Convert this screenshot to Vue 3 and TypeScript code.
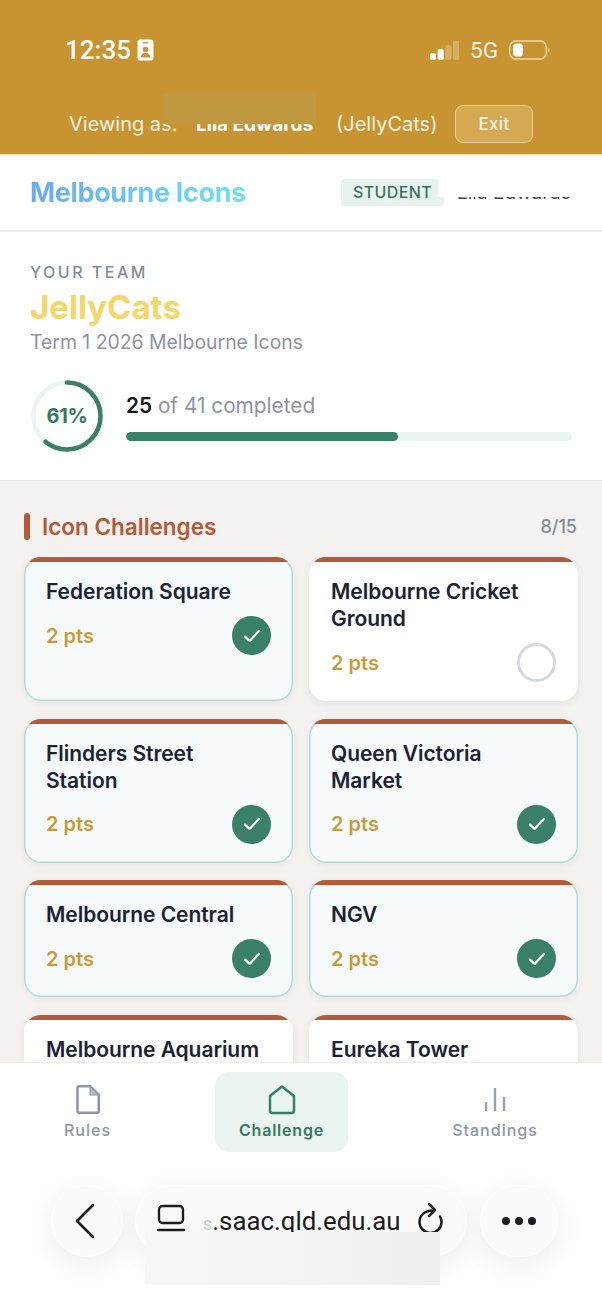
<script setup lang="ts">
interface Challenge { name: string; done: boolean; peek?: boolean }
const cards: Challenge[] = [
  { name: 'Federation Square', done: true },
  { name: 'Melbourne Cricket Ground', done: false },
  { name: 'Flinders Street Station', done: true },
  { name: 'Queen Victoria Market', done: true },
  { name: 'Melbourne Central', done: true },
  { name: 'NGV', done: true },
  { name: 'Melbourne Aquarium', done: false, peek: true },
  { name: 'Eureka Tower', done: false, peek: true },
]
</script>

<template>
  <div class="page">
    <header class="gold">
      <div class="status">
        <div class="time">
          <span>12:35</span>
          <svg width="17" height="22" viewBox="0 0 17 22" class="badge">
            <rect x=".5" y=".5" width="16" height="21" rx="2.5" fill="#fff" />
            <rect x="5.500" y="3" width="6" height="1.500" rx=".7" fill="#c89432" />
            <circle cx="8.500" cy="10.500" r="2.800" fill="#c89432" />
            <path d="M3.800 18.500c0-3.200 2.100-4.700 4.700-4.700s4.700 1.500 4.700 4.700z" fill="#c89432" />
          </svg>
        </div>
        <div class="right">
          <svg width="29" height="20" viewBox="0 0 29 20">
            <rect x="0" y="13" width="6" height="7" rx="1.800" fill="#fff" />
            <rect x="7.700" y="9" width="6" height="11" rx="1.800" fill="#fff" />
            <rect x="15.400" y="5" width="6" height="15" rx="1.800" fill="#fff" opacity=".25" />
            <rect x="23" y="1" width="6" height="19" rx="1.800" fill="#fff" opacity=".25" />
          </svg>
          <span class="net">5G</span>
          <svg width="41" height="20" viewBox="0 0 41 20">
            <rect x=".75" y="1" width="36.500" height="18" rx="6" fill="none" stroke="#f0d9a4" stroke-width="1.400" />
            <rect x="4" y="3.500" width="10" height="13" rx="3.500" fill="#fff" />
            <path d="M39 7.500c1.300.5 1.500 4.500 0 5z" fill="#f0d9a4" />
          </svg>
        </div>
      </div>
      <div class="viewing">
        <span class="v1">Viewing as:</span>
        <strong class="v2">Lila Edwards</strong>
        <span class="v3">(JellyCats)</span>
        <button class="exit">Exit</button>
      </div>
      <div class="blot gold-blot"></div>
    </header>

    <div class="apphead">
      <span class="brand">Melbourne Icons</span>
      <span class="role">STUDENT</span>
      <span class="uname">Lila Edwards</span>
      <div class="blot white-blot"></div>
    </div>

    <section class="team">
      <div class="eyebrow">YOUR TEAM</div>
      <div class="teamname">JellyCats</div>
      <div class="term">Term 1 2026 Melbourne Icons</div>
      <div class="progress">
        <div class="ring">
          <svg width="74" height="74" viewBox="0 0 74 74">
            <circle cx="37" cy="37" r="33.500" fill="none" stroke="#eaf4f0" stroke-width="4.500" />
            <circle cx="37" cy="37" r="33.500" fill="none" stroke="#3a7f68" stroke-width="4.500" stroke-linecap="round"
              stroke-dasharray="128.400 210.500" transform="rotate(-90 37 37)" />
          </svg>
          <span class="pct">61%</span>
        </div>
        <div class="pinfo">
          <div class="ptext"><b>25</b> of 41 completed</div>
          <div class="track"><div class="fill" :style="{ width: '61%' }"></div></div>
        </div>
      </div>
    </section>

    <main class="body">
      <div class="sechead">
        <div class="sectitle"><i class="tick"></i>Icon Challenges</div>
        <span class="count">8/15</span>
      </div>
      <div class="grid">
        <article v-for="c in cards" :key="c.name" class="card" :class="{ done: c.done }">
          <h3>{{ c.name }}</h3>
          <div v-if="!c.peek" class="foot">
            <span class="pts">2 pts</span>
            <span v-if="c.done" class="check">
              <svg width="18" height="18" viewBox="0 0 18 18"><path d="M2 9.600l4.600 4.300L16 3.800" fill="none" stroke="#fff" stroke-width="2.200" stroke-linecap="round" stroke-linejoin="round" /></svg>
            </span>
            <span v-else class="open"></span>
          </div>
        </article>
      </div>
    </main>

    <nav class="tabs">
      <div class="tab">
        <svg width="28" height="32" viewBox="0 0 28 32" fill="none" stroke="#8e95a8" stroke-width="2.500" stroke-linejoin="round">
          <path d="M3.500 5c0-1 .7-1.800 1.700-1.800H16L24.800 12v16c0 1-.7 1.800-1.700 1.800H5.200C4.200 29.800 3.500 29 3.500 28z" />
          <path d="M16 3.500V12h8.500z" fill="#b9bdca" stroke-width="1" />
        </svg>
        <span>Rules</span>
      </div>
      <div class="tab active">
        <svg width="28" height="32" viewBox="0 0 28 32" fill="none" stroke="#3a7f68" stroke-width="2.500" stroke-linejoin="round">
          <path d="M14 3.500L26 13v14.500c0 1.500-1 2.500-2.500 2.500h-19C3 30 2 29 2 27.500V13z" />
        </svg>
        <span>Challenge</span>
      </div>
      <div class="tab">
        <svg width="28" height="32" viewBox="0 0 28 32" fill="none" stroke="#9aa0b2" stroke-width="2.400">
          <path d="M5 28v-9M14 28V5M23 28V14" />
        </svg>
        <span>Standings</span>
      </div>
    </nav>

    <footer class="browser">
      <div class="round back">
        <svg width="24" height="38" viewBox="0 0 24 38"><path d="M20 3L4 19l16 16" fill="none" stroke="#1c1c1e" stroke-width="2.600" stroke-linecap="round" stroke-linejoin="round" /></svg>
      </div>
      <div class="url">
        <svg width="30" height="32" viewBox="0 0 30 32" fill="none" stroke="#1c1c1e" stroke-width="2.300">
          <rect x="3" y="3" width="24" height="17" rx="3.500" />
          <path d="M2 27h26" stroke-linecap="round" />
        </svg>
        <span class="host"><em>s</em>.saac.qld.edu.au</span>
        <svg width="30" height="34" viewBox="0 0 30 34" fill="none" stroke="#1c1c1e" stroke-width="2.500" stroke-linecap="round" stroke-linejoin="round">
          <path d="M17 8.500C9 8.500 3.500 13 3.500 20c0 6 5 11 11 11s11-5 11-11c0-2-.5-4-1.500-5.500" />
          <path d="M13 2l6 6-6 6" />
        </svg>
      </div>
      <div class="round more"><i></i><i></i><i></i></div>
      <div class="blot url-blot"></div>
    </footer>
  </div>
</template>

<style>
html, body { margin: 0; background: #fff; }
</style>

<style scoped>
* { box-sizing: border-box; }
.page {
  width: 602px; height: 1308px; overflow: hidden; position: relative;
  display: flex; flex-direction: column; background: #fff;
  font-family: Inter, "Liberation Sans", sans-serif;
}
.gold { height: 155px; flex: none; background: #c89432; position: relative; color: #fff; border-bottom: 1px solid #f2dcae; }
.status { display: flex; justify-content: space-between; align-items: center; padding: 37px 52px 0 65px; height: 62px; }
.time { display: flex; align-items: center; gap: 6px; font-size: 26px; font-weight: 500; font-family: Roboto, Inter, sans-serif; }
.badge { display: block; }
.right { display: flex; align-items: center; gap: 11px; }
.right svg { display: block; }
.net { font-size: 22.500px; font-weight: 400; font-family: Roboto, Inter, sans-serif; color: #fbf3e2; }
.viewing { display: flex; align-items: center; height: 38px; margin-top: 43px; padding-left: 69px; font-size: 20px; line-height: 1; white-space: nowrap; }
.v1 { width: 127px; flex: none; color: #fbf3e2; }
.v2 { width: 140px; flex: none; font-size: 19px; font-weight: 700; }
.v3 { width: 119px; flex: none; color: #fbf3e2; }
.exit {
  width: 78px; height: 38px; flex: none; border-radius: 8px; border: 1.500px solid #e9cf98; background: #d5a954;
  color: #fbf3e2; font: 500 17px Inter, sans-serif; letter-spacing: .3px; padding: 0;
}
.blot { position: absolute; }
.gold-blot { left: 162px; top: 93px; width: 154px; height: 31px; background: #bf983f; }
.apphead { height: 77px; flex: none; display: flex; align-items: center; position: relative; padding-left: 30px; border-bottom: 2px solid #ececec; }
.brand {
  width: 311px; flex: none; font-size: 27px; font-weight: 700; letter-spacing: -.36px; white-space: nowrap;
  background: linear-gradient(90deg, #6aaaf0 0, #70e0f5 216px);
  -webkit-background-clip: text; background-clip: text; color: transparent;
}
.role {
  width: 103px; height: 27px; flex: none; background: #e8f3ef; border-radius: 4px; color: #37745f;
  font-size: 16px; font-weight: 500; letter-spacing: .4px; line-height: 27px; text-align: center;
}
.uname { margin-left: 13px; font-size: 19px; color: #45474f; white-space: nowrap; }
.white-blot { left: 438px; top: 10px; width: 164px; height: 32px; background: #fff; }
.team { height: 249px; flex: none; padding: 31px 30px 0; border-bottom: 1px solid #ececea; }
.eyebrow { font-size: 16px; line-height: 18px; font-weight: 500; letter-spacing: 2.500px; color: #858b9b; }
.teamname { font-size: 33px; line-height: 40px; font-weight: 700; color: #f6d56b; margin-top: 6px; }
.term { font-size: 19.400px; line-height: 24px; color: #8d93a3; margin-top: 3px; }
.progress { display: flex; align-items: center; margin-top: 25px; gap: 22px; }
.ring { width: 74px; height: 74px; position: relative; flex: none; }
.ring svg { display: block; }
.pct { position: absolute; inset: 0; display: flex; align-items: center; justify-content: center; font-size: 20px; font-weight: 700; color: #37785f; letter-spacing: -.3px; }
.pinfo { flex: 1; padding-top: 1px; }
.ptext { font-size: 20.800px; line-height: 26px; color: #8d93a3; margin-bottom: 13px; }
.ptext b { font-weight: 600; color: #16161a; }
.track { height: 9px; border-radius: 5px; background: #eaf4f0; overflow: hidden; }
.fill { height: 100%; background: #3a7f68; border-radius: 5px; }
.body { height: 581px; flex: none; overflow: hidden; background: #f4f2f0; padding: 32px 24px 0; }
.sechead { display: flex; justify-content: space-between; align-items: center; height: 27px; padding-right: 1px; }
.sectitle { display: flex; align-items: center; gap: 12px; font-size: 22.500px; font-weight: 600; color: #b35a38; }
.tick { width: 6px; height: 27px; border-radius: 3px; background: #b35a38; }
.count { font-size: 18px; font-weight: 500; color: #858b9b; }
.grid { display: grid; grid-template-columns: 1fr 1fr; gap: 17.500px 16px; margin-top: 17px; }
.card {
  background: #fff; border-radius: 17px; padding: 21px 22px 19px; position: relative; overflow: hidden;
  box-shadow: 0 2px 9px rgba(0, 0, 0, .07); display: flex; flex-direction: column;
}
.card::before { content: ""; position: absolute; left: 0; right: 0; top: 0; height: 5px; background: #b35a38; }
.card.done { background: #f6fafa; box-shadow: inset 0 0 0 1.500px #b4dad2, 0 2px 9px rgba(0, 0, 0, .05); }
.card h3 { margin: 0; max-width: 216px; font-size: 21px; line-height: 27px; font-weight: 600; color: #1a2233; letter-spacing: -.05px; }
.foot { display: flex; align-items: center; justify-content: space-between; margin-top: 11px; }
.pts { font-size: 20px; font-weight: 600; color: #c89a3f; }
.check, .open { width: 39px; height: 39px; border-radius: 50%; display: flex; align-items: center; justify-content: center; flex: none; }
.check { background: #3a7f68; }
.open { border: 3px solid #d4d9df; background: #fff; }
.tabs { height: 99px; flex: none; display: flex; background: #fff; border-top: 1px solid #ececec; padding-top: 9px; position: relative; }
.tab { height: 80px; flex: none; display: flex; flex-direction: column; align-items: center; font-size: 16px; font-weight: 500; letter-spacing: 1px; color: #8e95a8; }
.tab svg { display: block; margin-top: 11px; margin-bottom: 5px; }
.tab:nth-child(1) { width: 175px; margin-right: 40px; }
.tab:nth-child(3) { width: 214px; margin-left: 40px; }
.tab.active { width: 133px; background: #eaf4f0; border-radius: 14px; color: #37785f; font-weight: 600; letter-spacing: .8px; }
.browser { flex: 1; position: relative; display: flex; padding: 24px 44px 0 51px; background: #fff; align-items: flex-start; }
.round, .url {
  height: 72px; border-radius: 36px; background: #fafafa; border: 1.500px solid #fff;
  box-shadow: 0 8px 34px rgba(0, 0, 0, .08); display: flex; align-items: center; flex: none;
}
.back { width: 72px; justify-content: center; padding-right: 4px; margin-right: 12px; }
.url { width: 332px; padding: 0 20px; margin-right: 13px; }
.url svg { flex: none; margin-top: -4px; }
.host { flex: 1; margin-left: 17px; font-size: 25.800px; color: #1c1c1e; font-family: Roboto, Inter, sans-serif; white-space: nowrap; }
.host em { font-style: normal; color: #c9c9c9; font-size: 18px; }
.more { width: 78px; justify-content: center; gap: 5px; }
.more i { width: 8px; height: 8px; border-radius: 50%; background: #1c1c1e; }
.url-blot { left: 145px; top: 71px; width: 295px; height: 53px; background: linear-gradient(90deg, #f7f7f7, #efefef); }
</style>
